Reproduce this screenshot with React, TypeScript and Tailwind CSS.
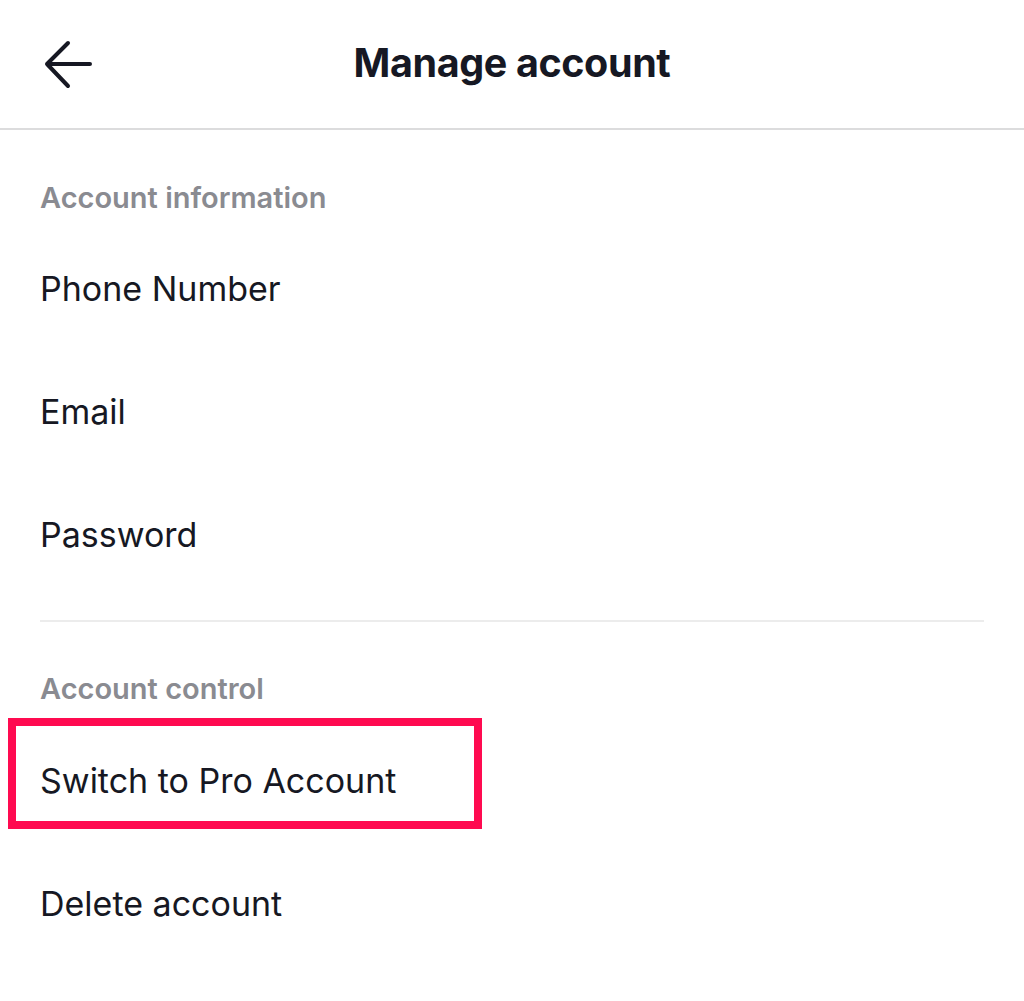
const font = { fontFamily: 'Inter, "Noto Sans", sans-serif' };

function BackArrow() {
  return (
    <svg width="52" height="52" viewBox="0 0 52 52" fill="none" className="text-[#161823]">
      <path d="M4 26H47M25 5L4 26L25 48" stroke="currentColor" strokeWidth="4" strokeLinecap="round" strokeLinejoin="round" />
    </svg>
  );
}

function SectionTitle({ children }: { children: React.ReactNode }) {
  return <div className="px-10 text-[29px] font-semibold leading-none text-[#8a8b91]">{children}</div>;
}

function Row({ label, highlighted }: { label: string; highlighted?: boolean }) {
  return (
    <div className="relative flex h-[123px] items-center px-10 text-[34px] leading-none text-[#161823]">
      {highlighted && (
        <div className="pointer-events-none absolute top-[-1px] left-2 h-[111px] w-[474px] border-8 border-[#ff0a50]" />
      )}
      <span>{label}</span>
    </div>
  );
}

export default function App() {
  return (
    <div className="min-h-screen w-full bg-white" style={font}>
      <header className="grid h-[130px] grid-cols-[1fr_auto_1fr] items-center border-b-2 border-[#dcdcdd]">
        <div className="pl-[43px]">
          <BackArrow />
        </div>
        <h1 className="text-[39.5px] font-bold tracking-[-0.01em] text-[#161823]">Manage account</h1>
        <div />
      </header>

      <div className="pt-[53px]">
        <SectionTitle>Account information</SectionTitle>
      </div>
      <div className="pt-[15px]">
        <Row label="Phone Number" />
        <Row label="Email" />
        <Row label="Password" />
      </div>

      <div className="mx-10 mt-6 border-t-2 border-[#ececec]" />

      <div className="pt-[52px]">
        <SectionTitle>Account control</SectionTitle>
      </div>
      <div className="pt-[16px]">
        <Row label="Switch to Pro Account" highlighted />
        <Row label="Delete account" />
      </div>
    </div>
  );
}
